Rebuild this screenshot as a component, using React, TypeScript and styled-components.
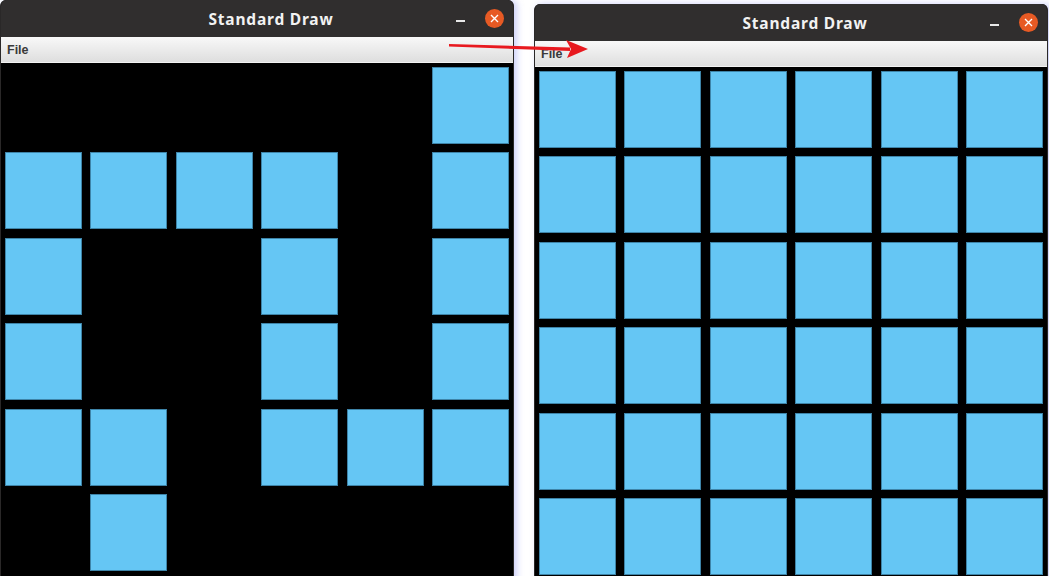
import React from "react";
import styled, { createGlobalStyle } from "styled-components";

const GlobalStyle = createGlobalStyle`
  html, body { margin: 0; padding: 0; background: #ffffff; overflow: hidden; }
  * { box-sizing: border-box; }
`;

const Stage = styled.div`
  position: relative;
  width: 1049px;
  height: 576px;
  overflow: hidden;
  background: #ffffff;
  display: flex;
  align-items: flex-start;
  gap: 20px;
  font-family: "Noto Sans", "Open Sans", sans-serif;
`;

const Window = styled.div<{ $top: number }>`
  margin-top: ${(p) => p.$top}px;
  width: 514px;
  display: flex;
  flex-direction: column;
  background: #000;
  border-left: 1px solid #2a2828;
  border-right: 1px solid #2a2828;
  border-radius: 6px 6px 0 0;
  overflow: hidden;
  box-shadow: 3px 0 7px rgba(110, 120, 240, 0.35);
  flex-shrink: 0;
`;

const TitleBar = styled.div`
  height: 37px;
  background: #302e2e;
  display: grid;
  grid-template-columns: 1fr auto 1fr;
  align-items: center;
  padding-left: 37px;
  padding-right: 9px;
`;

const Title = styled.div`
  grid-column: 2;
  color: #f2f2f2;
  font-weight: 700;
  font-size: 15.5px;
  letter-spacing: 0.8px;
  margin-top: 1px;
`;

const Controls = styled.div`
  grid-column: 3;
  justify-self: end;
  display: flex;
  align-items: center;
  gap: 20px;
`;

const Minimize = styled.div`
  width: 9px;
  height: 2px;
  background: #e8e8e8;
  margin-top: 5px;
`;

const Close = styled.div`
  width: 19px;
  height: 19px;
  border-radius: 50%;
  background: #e75a24;
  display: flex;
  align-items: center;
  justify-content: center;
`;

const MenuBar = styled.div`
  height: 26px;
  background: linear-gradient(#f8f8f8, #dedede);
  border-bottom: 1px solid #f2f2f2;
  display: flex;
  align-items: center;
  padding-left: 6px;
`;

const MenuItem = styled.span`
  font-family: "Liberation Sans", "Noto Sans", sans-serif;
  font-weight: 700;
  font-size: 12.5px;
  color: #3a3a3a;
`;

const Canvas = styled.div`
  width: 512px;
  height: 520px;
  background: #000;
  padding: 4px;
  display: grid;
  grid-template-columns: repeat(6, 77px);
  grid-auto-rows: 77px;
  column-gap: 8.4px;
  row-gap: 8.4px;
`;

const Cell = styled.div<{ $on: boolean }>`
  background: ${(p) => (p.$on ? "#65c6f4" : "transparent")};
  border: 1px solid ${(p) => (p.$on ? "#3e84a8" : "transparent")};
`;

const Overlay = styled.svg`
  position: absolute;
  left: 0;
  top: 0;
  pointer-events: none;
`;

const leftPattern = [
  "000001",
  "111101",
  "100101",
  "100101",
  "110111",
  "010000",
];
const rightPattern = Array(6).fill("111111");

function DrawWindow({ top, pattern }: { top: number; pattern: string[] }) {
  return (
    <Window $top={top}>
      <TitleBar>
        <Title>Standard Draw</Title>
        <Controls>
          <Minimize />
          <Close>
            <svg width="9" height="9" viewBox="0 0 9 9">
              <path d="M1 1L8 8M8 1L1 8" stroke="#fff" strokeWidth="1.4" />
            </svg>
          </Close>
        </Controls>
      </TitleBar>
      <MenuBar>
        <MenuItem>File</MenuItem>
      </MenuBar>
      <Canvas>
        {pattern.flatMap((row, r) =>
          row.split("").map((c, i) => <Cell key={`${r}-${i}`} $on={c === "1"} />)
        )}
      </Canvas>
    </Window>
  );
}

export default function App() {
  return (
    <>
      <GlobalStyle />
      <Stage>
        <DrawWindow top={0} pattern={leftPattern} />
        <DrawWindow top={4} pattern={rightPattern} />
        <Overlay width="1049" height="576">
          <polygon points="449,44 570,47.5 570,51 449,46.5" fill="#e8191f" />
          <polygon points="566,40 588,49 567,58 571,49" fill="#e8191f" />
        </Overlay>
      </Stage>
    </>
  );
}
